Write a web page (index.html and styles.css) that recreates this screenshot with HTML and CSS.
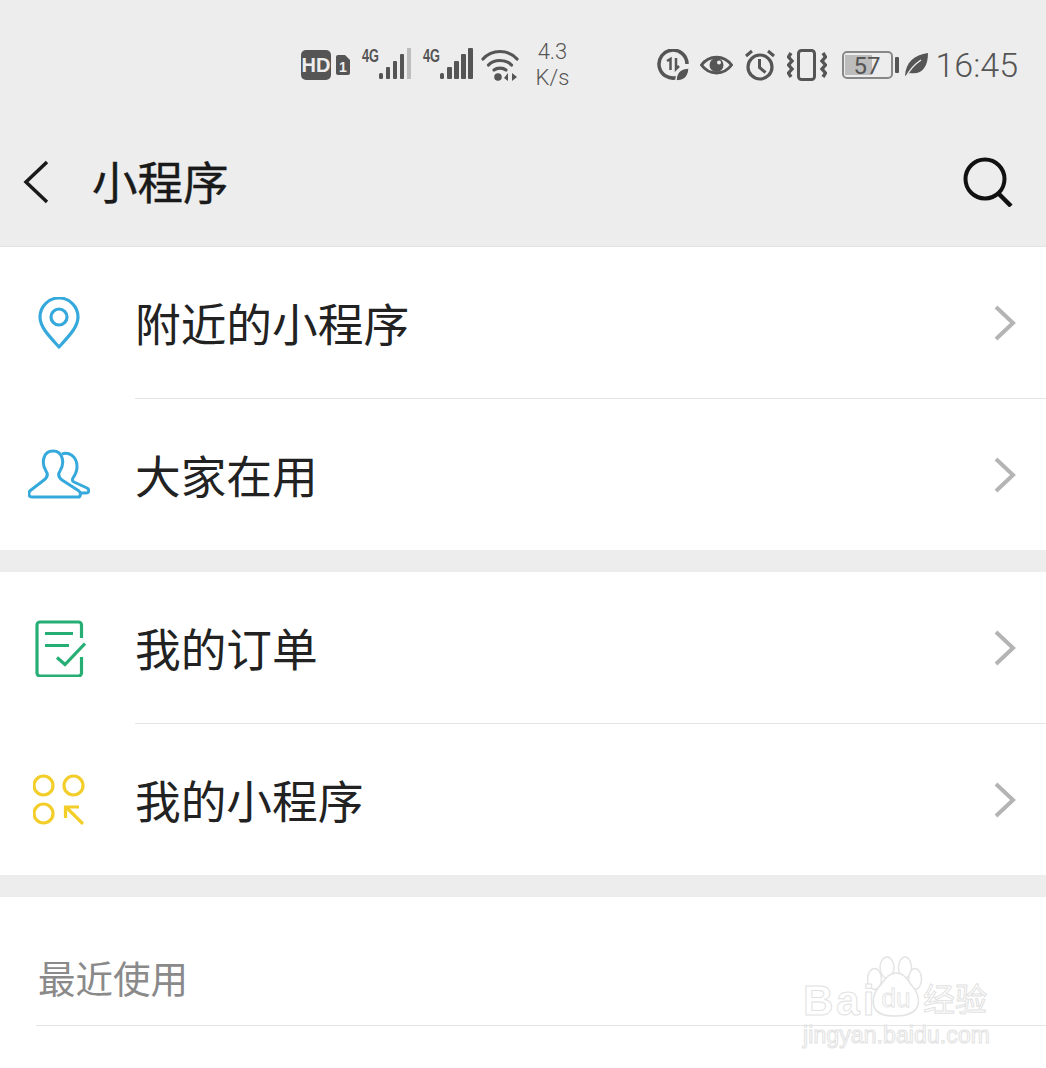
FILE: index.html
```html
<!DOCTYPE html>
<html lang="zh-CN">
<head>
  <meta charset="UTF-8">
  <meta name="viewport" content="width=device-width, initial-scale=1.0">
  <title>小程序</title>
  <link rel="stylesheet" href="styles.css">
</head>
<body>
  <div id="screen">
    <header class="top">
      <div class="status">
        <svg class="st" width="30" height="30" viewBox="0 0 30 30"><rect width="30" height="30" rx="5" fill="#555"/><text x="15" y="22" class="hd">HD</text></svg>
        <svg class="st gap-5" width="14" height="20" viewBox="0 0 14 20"><path d="M0 2a2 2 0 0 1 2-2h7l5 5v13a2 2 0 0 1-2 2H2a2 2 0 0 1-2-2z" fill="#555"/><text x="7" y="16.500" class="sim">1</text></svg>
        <svg class="st gap-11" width="50" height="40" viewBox="0 -2 50 40"><text x="1" y="15" class="net" textLength="17" lengthAdjust="spacingAndGlyphs">4G</text><g fill="#555"><rect x="18" y="26" width="4" height="6" rx="1.500"/><rect x="25" y="20" width="4" height="12" rx="1"/><rect x="32" y="14" width="4" height="18" rx="1"/><rect x="39" y="7" width="4" height="25" rx="1"/></g><rect x="46" y="1" width="4" height="31" fill="#bdbdbd"/></svg>
        <svg class="st gap-11" width="51" height="40" viewBox="0 -2 51 40"><text x="1" y="15" class="net" textLength="17" lengthAdjust="spacingAndGlyphs">4G</text><g fill="#555"><rect x="18" y="26" width="4" height="6" rx="1.500"/><rect x="25" y="20" width="5" height="12" rx="1"/><rect x="32" y="14" width="5" height="18" rx="1"/><rect x="39" y="7" width="5" height="25" rx="1"/><rect x="46" y="1" width="5" height="31" rx="1"/></g></svg>
        <svg class="st gap-8" width="38" height="34" viewBox="0 0 38 34"><g fill="none" stroke="#555" stroke-width="3.200" stroke-linecap="round"><path d="M2 11C11 1 27 1 36 11"/><path d="M7.500 17C13 11 25 11 30.500 17"/><path d="M13 22C16 19.500 22 19.500 25 22"/></g><circle cx="17" cy="29" r="3.800" fill="#555"/><path d="M27 33V25l-4 5zM31 25v8l5-4z" fill="#555"/></svg>
        <div class="speed gap-16">4.3<br>K/s</div>
        <div class="spacer"></div>
        <svg class="st" width="32" height="32" viewBox="0 0 32 32"><path d="M20 28.500A14 14 0 1 1 30 15" fill="none" stroke="#555" stroke-width="3.500"/><path d="M10 12l3.500-2v11M19 9v11l3-3" fill="none" stroke="#555" stroke-width="2.500"/><path d="M19 32c0-8 4-13 13-13 0 8-4 13-13 13z" fill="#555" stroke="#ededed" stroke-width="1.500"/></svg>
        <svg class="st gap-11" width="33" height="24" viewBox="0 0 33 24"><path d="M1.500 12C9 1.500 24 1.500 31.500 12 24 22.500 9 22.500 1.500 12z" fill="none" stroke="#555" stroke-width="3"/><circle cx="16.500" cy="12" r="7" fill="#555"/><circle cx="19" cy="9.500" r="2" fill="#ededed"/></svg>
        <svg class="st gap-11" width="32" height="32" viewBox="0 0 32 32"><circle cx="16" cy="18" r="12" fill="none" stroke="#555" stroke-width="3.200"/><path d="M15.500 10v8.500l6 5" fill="none" stroke="#555" stroke-width="3"/><path d="M2 7l6-5M30 7l-6-5" stroke="#555" stroke-width="3" fill="none"/></svg>
        <svg class="st gap-11" width="40" height="32" viewBox="0 0 40 32"><rect x="11.500" y="1.500" width="16" height="29" rx="3" fill="none" stroke="#555" stroke-width="3"/><path d="M4 4L1.500 8 5 12l-3.500 4L5 20l-3.500 4L4 28M36 4l2.500 4L35 12l3.500 4L35 20l3.500 4L36 28" fill="none" stroke="#555" stroke-width="3.400"/></svg>
        <svg class="st gap-15" width="57" height="28" viewBox="0 0 57 28"><rect x="1" y="1" width="49" height="26" rx="4" fill="none" stroke="#888" stroke-width="2"/><rect x="3" y="4" width="27" height="20" fill="#bcbcbc"/><rect x="53" y="6" width="4" height="16" rx="1" fill="#555"/><text x="25" y="22.500" class="batt">57</text></svg>
        <svg class="st gap-6" width="23" height="25" viewBox="0 0 23 25"><path d="M0 23C1 9 9 2 23 0c0 14-6 22-18 20z" fill="#555"/><path d="M1 24C5 16 10 11 16 7" stroke="#ededed" stroke-width="1.500" fill="none"/></svg>
        <div class="time gap-7">16:45</div>
      </div>
      <nav class="nav">
        <svg class="back" width="26" height="44" viewBox="0 0 26 44"><path d="M24 2L3 22l21 20" fill="none" stroke="#1a1a1a" stroke-width="3.500"/></svg>
        <h1 class="title">小程序</h1>
        <svg class="search" width="50" height="50" viewBox="0 0 50 50"><circle cx="22" cy="22" r="19.500" fill="none" stroke="#111" stroke-width="4"/><path d="M35 36l13 13" stroke="#111" stroke-width="4.500" fill="none"/></svg>
      </nav>
    </header>

    <section class="group">
      <div class="row">
        <div class="row-icon">
          <svg width="42" height="52" viewBox="0 0 42 52"><path d="M21 50C11 39 2 30 2 20a19 19 0 0 1 38 0c0 10-9 19-19 30z" fill="none" stroke="#35a9dc" stroke-width="3.200" stroke-linejoin="round"/><circle cx="21" cy="20" r="8" fill="none" stroke="#35a9dc" stroke-width="3.200"/></svg>
        </div>
        <div class="row-body"><span class="row-label">附近的小程序</span>
          <svg class="chev" width="22" height="36" viewBox="0 0 22 36"><path d="M2 2l17 16L2 34" fill="none" stroke="#b4b4b4" stroke-width="4"/></svg>
        </div>
      </div>
      <div class="row">
        <div class="row-icon">
          <svg width="62" height="50" viewBox="0 0 62 50"><path d="M4 48H50c3 0 3-4 1-6L34 31c-4-3-4-6-2-9 5-8 3-20-7-20S13 14 18 22c2 3 2 6-2 9L3 41c-3 2-3 7 1 7z" fill="none" stroke="#35a9dc" stroke-width="3" stroke-linejoin="round"/><path d="M34 5C40 3 49 6 49 18c0 5-2 8-4 11-1 2-1 3 1 4l13 6c3 2 2 5-1 5H52" fill="none" stroke="#35a9dc" stroke-width="3" stroke-linejoin="round"/></svg>
        </div>
        <div class="row-body"><span class="row-label">大家在用</span>
          <svg class="chev" width="22" height="36" viewBox="0 0 22 36"><path d="M2 2l17 16L2 34" fill="none" stroke="#b4b4b4" stroke-width="4"/></svg>
        </div>
      </div>
    </section>

    <section class="group">
      <div class="row">
        <div class="row-icon">
          <svg width="54" height="58" viewBox="0 0 54 58"><path d="M49.500 19V6a3 3 0 0 0-3-3H8a3 3 0 0 0-3 3v48a3 3 0 0 0 3 3h38.500a3 3 0 0 0 3-3V38" fill="none" stroke="#27ae74" stroke-width="3.200"/><path d="M13 14.500h28M13 26.500h24" stroke="#27ae74" stroke-width="3.200"/><path d="M25 38.500l8 7 20-21" fill="none" stroke="#27ae74" stroke-width="3.200"/></svg>
        </div>
        <div class="row-body"><span class="row-label">我的订单</span>
          <svg class="chev" width="22" height="36" viewBox="0 0 22 36"><path d="M2 2l17 16L2 34" fill="none" stroke="#b4b4b4" stroke-width="4"/></svg>
        </div>
      </div>
      <div class="row">
        <div class="row-icon">
          <svg width="52" height="52" viewBox="0 0 52 52"><g fill="none" stroke="#f3ce2a" stroke-width="3.200"><circle cx="10.500" cy="12.500" r="9.500"/><circle cx="40.500" cy="12.500" r="9.500"/><circle cx="10.500" cy="40.500" r="9.500"/><path d="M32.500 45V34H46M33 34l17 17"/></g></svg>
        </div>
        <div class="row-body"><span class="row-label">我的小程序</span>
          <svg class="chev" width="22" height="36" viewBox="0 0 22 36"><path d="M2 2l17 16L2 34" fill="none" stroke="#b4b4b4" stroke-width="4"/></svg>
        </div>
      </div>
    </section>

    <section class="recent">
      <div class="recent-title">最近使用</div>
    </section>

    <div class="watermark">
      <svg class="paw" width="58" height="64" viewBox="0 0 58 64"><g fill="#fff" stroke="#e4e4e4" stroke-width="1.500"><ellipse cx="9.500" cy="24" rx="7" ry="10.500"/><ellipse cx="22" cy="12.500" rx="7" ry="10.500"/><ellipse cx="40" cy="12.500" rx="6.500" ry="10.500"/><ellipse cx="50" cy="24" rx="6.500" ry="10.500"/><path d="M31 18c9 0 12 8 17 14 6 7 7 17 3 22-5 6-12 7-21 7s-16-1-20-7c-3-6-2-15 3-21 6-6 9-15 18-15z"/></g><text x="31" y="52" class="wm-du">du</text></svg>
      <span class="wm-bai">Bai</span>
      <span class="wm-cn">经验</span>
      <span class="wm-url">jingyan.baidu.com</span>
    </div>
  </div>
</body>
</html>
```

FILE: styles.css
```css
html, body {
  margin: 0;
  padding: 0;
  height: 100%;
  background: #fff;
  overflow: hidden;
  font-family: "Noto Sans CJK SC", "Noto Sans", sans-serif;
}

#screen {
  position: relative;
  width: 1046px;
  height: 1068px;
  overflow: hidden;
}

.top {
  height: 246px;
  background: #ededed;
  border-bottom: 1px solid #e2e2e2;
}

.status {
  height: 130px;
  display: flex;
  align-items: center;
  padding: 0 28px 0 301px;
  color: #555;
}

.st {
  flex: none;
  display: block;
}

.gap-5 { margin-left: 5px; }
.gap-6 { margin-left: 6px; }
.gap-7 { margin-left: 7px; }
.gap-8 { margin-left: 8px; }
.gap-11 { margin-left: 11px; }
.gap-15 { margin-left: 15px; }
.gap-16 { margin-left: 16px; }

.spacer {
  flex: 1;
}

.hd {
  font: bold 20px "Liberation Sans", sans-serif;
  fill: #ededed;
  text-anchor: middle;
}

.sim {
  font: bold 14px "Liberation Sans", sans-serif;
  fill: #ededed;
  text-anchor: middle;
}

.net {
  font: bold 19px "Liberation Sans", sans-serif;
  fill: #555;
}

.batt {
  font: 24px "Roboto", sans-serif;
  fill: #555;
  text-anchor: middle;
}

.speed {
  width: 35px;
  font: 300 22px/26px "Roboto", sans-serif;
  color: #555;
  text-align: center;
}

.time {
  font: 300 34px "Roboto", sans-serif;
  color: #555;
}

.nav {
  height: 104px;
  display: flex;
  align-items: center;
  padding: 0 33px 0 23px;
}

.back {
  flex: none;
}

.title {
  margin: 0 0 5px 43px;
  flex: 1;
  font-size: 45.500px;
  font-weight: 400;
  color: #1a1a1a;
  -webkit-text-stroke: 0.4px #1a1a1a;
}

.search {
  flex: none;
}

.group {
  border-bottom: 22px solid #ededed;
}

.row {
  height: 151px;
  display: flex;
}

.row + .row {
  height: 152px;
}

.row-icon {
  width: 118px;
  flex: none;
  display: flex;
  align-items: center;
  justify-content: center;
}

.row-body {
  flex: 1;
  margin-left: 17px;
  display: flex;
  align-items: center;
  justify-content: space-between;
  padding-right: 30px;
}

.row + .row .row-body {
  border-top: 1px solid #e4e4e4;
}

.row-label {
  margin-bottom: 2px;
  font-size: 45.700px;
  color: #222;
}

.recent {
  height: 129px;
  margin-left: 36px;
  box-sizing: border-box;
  border-bottom: 1px solid #e4e4e4;
  display: flex;
  align-items: center;
}

.recent-title {
  margin-left: 2px;
  margin-top: 31px;
  font-size: 37.500px;
  color: #8a8a8a;
}

.watermark {
  position: absolute;
  left: 803px;
  top: 955px;
  width: 195px;
  height: 95px;
}

.paw {
  position: absolute;
  left: 62px;
  top: 0;
}

.wm-bai,
.wm-cn,
.wm-url {
  position: absolute;
  color: #fff;
  -webkit-text-stroke: 1px #e2e2e2;
  white-space: nowrap;
}

.wm-bai {
  left: 0;
  top: 22px;
  font: bold 42px/48px "Liberation Sans", sans-serif;
  letter-spacing: 3px;
}

.wm-cn {
  left: 120px;
  top: 20px;
  font-size: 32px;
  line-height: 44px;
}

.wm-url {
  left: 0;
  top: 66px;
  font: 23px/28px "Liberation Sans", sans-serif;
  letter-spacing: 0.1px;
}

.wm-du {
  font: 26px "Liberation Sans", sans-serif;
  fill: #fff;
  stroke: #e2e2e2;
  stroke-width: 0.8;
  text-anchor: middle;
}
```
